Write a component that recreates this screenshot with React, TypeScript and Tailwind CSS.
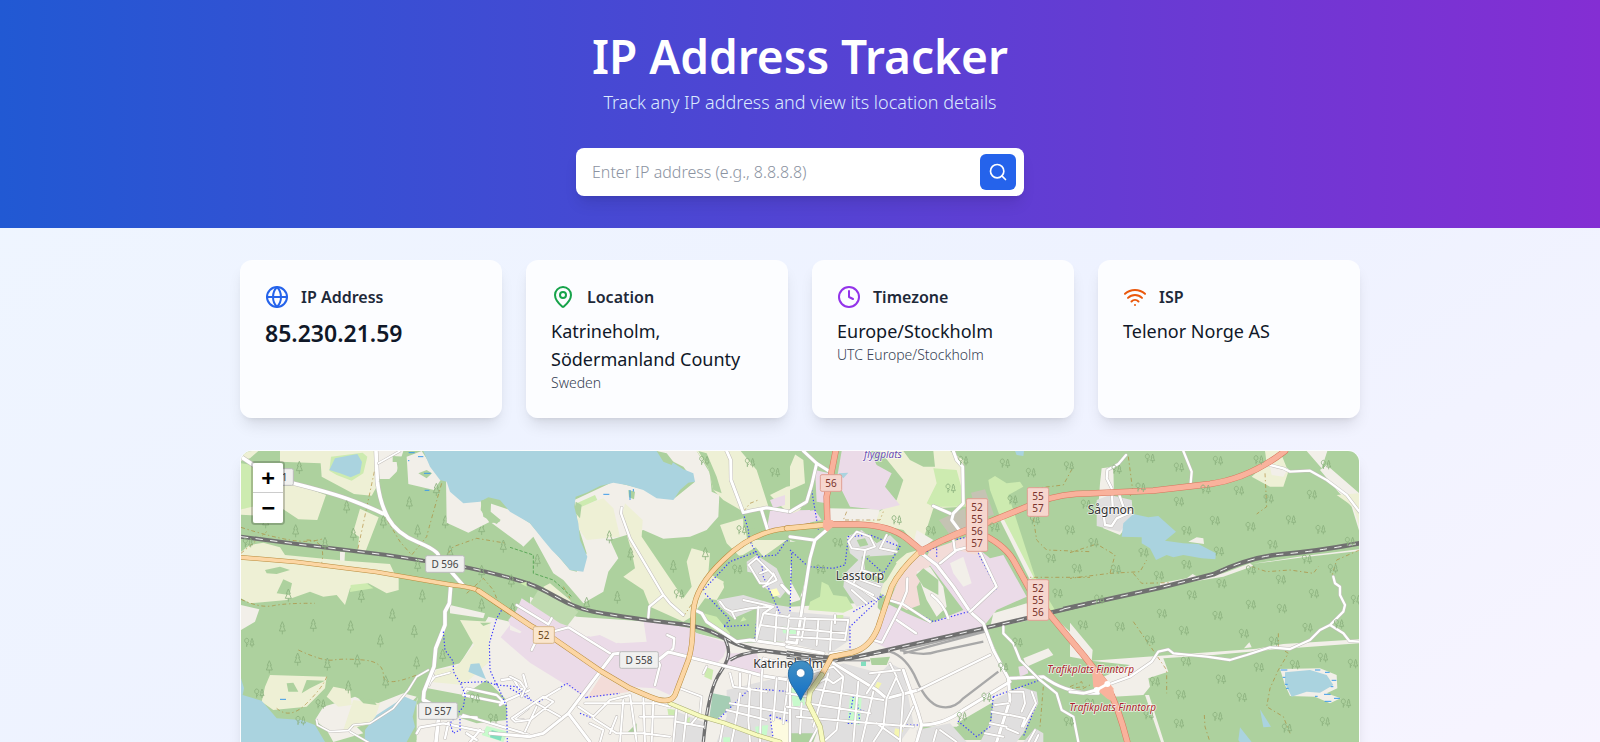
import { useState } from "react";
import type { FormEvent, ReactNode } from "react";
import { Clock, Globe, MapPin, Search, Wifi } from "lucide-react";

const FONT = "font-['Noto_Sans',sans-serif]";

type Point = [number, number];

function Card({ icon, title, children }: { icon: ReactNode; title: string; children: ReactNode }) {
  return (
    <section className="rounded-xl border border-white/20 bg-white/80 p-6 shadow-lg">
      <div className="mb-2 flex items-center gap-3">
        {icon}
        <h2 className="text-base font-semibold text-gray-800">{title}</h2>
      </div>
      {children}
    </section>
  );
}

/* ---------- map drawing ---------- */

function Area({ fill, d }: { fill: string; d: string }) {
  return <path d={d} fill={fill} />;
}

function Road({ d, w = 9, fill = "#ffffff", casing = "#c2bebb", edge = 3 }: { d: string; w?: number; fill?: string; casing?: string; edge?: number }) {
  return (
    <g fill="none" strokeLinecap="round" strokeLinejoin="round">
      <path d={d} stroke={casing} strokeWidth={w + edge} />
      <path d={d} stroke={fill} strokeWidth={w} />
    </g>
  );
}

function Rail({ d, w = 10 }: { d: string; w?: number }) {
  return (
    <g fill="none">
      <path d={d} stroke="#707070" strokeWidth={w} />
      <path d={d} stroke="#f4f4f4" strokeWidth={3} strokeDasharray="22 22" />
    </g>
  );
}

function Footway({ d }: { d: string }) {
  return <path d={d} fill="none" stroke="#3a3aff" strokeWidth={3.5} strokeDasharray="4 6" />;
}

function Track({ d }: { d: string }) {
  return <path d={d} fill="none" stroke="#ac8331" strokeOpacity={0.75} strokeWidth={2.5} strokeDasharray="12 8 4 8" />;
}

function Conifers({ at }: { at: Point[] }) {
  return (
    <g fill="none" stroke="#8bb17e" strokeWidth={2.5}>
      {at.map(([x, y]) => (
        <path key={`${x}-${y}`} d={`M${x} ${y - 18}l-6 14h3l-6 14h18l-6-14h3zM${x} ${y + 10}v10`} />
      ))}
    </g>
  );
}

function MixedTrees({ at }: { at: Point[] }) {
  return (
    <g fill="none" stroke="#8bb17e" strokeWidth={2.5}>
      {at.map(([x, y]) => (
        <path
          key={`${x}-${y}`}
          d={`M${x - 8} ${y - 13}a6 7 0 1 0 .1 0zM${x - 8} ${y + 1}v12M${x - 8} ${y + 9}l5-6M${x + 8} ${y - 13}l-4 10h2l-4 10h12l-4-10h2zM${x + 8} ${y + 7}v7`}
        />
      ))}
    </g>
  );
}

function Shield({ x, y, w, lines, tone = "grey" }: { x: number; y: number; w: number; lines: string[]; tone?: "grey" | "orange" | "red" }) {
  const colors = {
    grey: ["#f0f0ef", "#bcbcbc", "#444444"],
    orange: ["#fae6cd", "#d9b98c", "#6b4a1c"],
    red: ["#f6d6ce", "#e0a193", "#7a332c"],
  }[tone];
  return (
    <g>
      <rect x={x} y={y} width={w} height={lines.length * 36 + 14} rx={5} fill={colors[0]} stroke={colors[1]} strokeWidth={3} />
      {lines.map((line, i) => (
        <text key={line} x={x + w / 2} y={y + 37 + i * 36} textAnchor="middle" fontSize={30} fill={colors[2]}>
          {line}
        </text>
      ))}
    </g>
  );
}

function Label({ x, y, children, size = 36, fill = "#333333", italic = false }: { x: number; y: number; children: string; size?: number; fill?: string; italic?: boolean }) {
  return (
    <text
      x={x}
      y={y}
      textAnchor="middle"
      fontSize={size}
      fill={fill}
      fontStyle={italic ? "italic" : "normal"}
      stroke="#ffffff"
      strokeOpacity={0.7}
      strokeWidth={5}
      strokeLinejoin="round"
      paintOrder="stroke"
    >
      {children}
    </text>
  );
}

const FOREST = "#add19e";
const LAND = "#f2efe9";
const FARM = "#eef0d5";
const WATER = "#aad3df";
const HOMES = "#e0dfdf";
const INDUSTRY = "#ebdbe8";
const GRASS = "#cdebb0";
const PARK = "#c8facc";
const RETAIL = "#f3dcd8";

function WestMap() {
  return (
    <g>
      <Area fill={GRASS} d="M33 70L100 80L90 200L33 208Z" />
      <Area fill={FARM} d="M150 33L437 33L440 140L425 167L372 162L275 110L272 70L150 65ZM33 33L85 33L60 55L33 62ZM33 208L90 195L90 140L190 130L288 165L262 240L205 238L160 208L100 228L33 224Z" />
      <Area fill={GRASS} d="M303 50L398 38L412 50L400 100L365 122L320 105L298 92Z" />
      <Area fill={WATER} d="M315 55L350 48L382 42L396 66L390 100L362 112L330 100L298 90Z" />
      <Area fill={FARM} d="M390 206L446 232L405 338L383 332L387 290L369 278Z" />
      <Area fill={LAND} d="M443 33L520 33L500 95L478 117L448 117ZM530 50L575 33L632 120L612 150L535 132ZM330 335L345 337L343 375L330 375Z" />
      <Area fill={FOREST} d="M488 48L527 50L527 102L505 102L500 66L488 66ZM565 100L590 90L606 100L590 115Z" />
      <Area fill={FARM} d="M33 335L60 315L100 308L150 322L165 345L345 362L480 372L493 400L506 415L506 450L470 460L415 430L360 445L345 495L320 465L280 470L240 455L170 480L60 490L33 475Z" />
      <Area fill={FOREST} d="M105 390L150 380L180 390L140 402L110 400ZM160 418L186 430L178 465L140 460ZM182 480L235 470L190 484Z" />
      <Area fill={GRASS} d="M362 435L410 430L430 445L360 456Z" />
      <Area fill={LAND} d="M33 495L88 508L75 545L33 570ZM660 495L765 520L760 535L660 520ZM775 530L900 560L900 906L560 906L560 780L610 690L690 670L725 615Z" />
      <Area fill={FARM} d="M690 540L780 545L778 665L700 735L595 725L620 690L680 680L732 615ZM120 705L290 710L285 745L230 800L130 810L95 785L105 740Z" />
      <Area fill={FOREST} d="M170 730L190 728L205 755L175 755ZM230 720L285 722L240 745L215 760ZM750 548L785 548L760 558Z" />
      <Area fill={LAND} d="M255 840L280 800L330 785L375 770L430 795L520 760L560 770L500 830L380 860L400 880L310 906L290 870Z" />
      <Area fill={FARM} d="M310 740L360 750L365 795L325 800L290 770ZM370 780L450 790L430 850L340 870Z" />
      <Area fill={FOREST} d="M570 740L700 765L770 720L830 780L830 840L740 850L680 830L590 830L560 790ZM385 775L430 780L440 795L400 790Z" />
      <Area fill={WATER} d="M33 715L42 745L38 765L95 782L140 835L215 840L255 855L285 906L285 1100L33 1100ZM440 825L525 770L560 785L548 830L555 860L530 906L520 1000L400 1000L405 870ZM722 672L748 670L768 718L715 695Z" />
      <Area fill={PARK} d="M770 858L835 875L820 906L755 885Z" />
      <Area fill="#82dfbf" d="M785 870L818 880L812 902L780 892Z" />
      <Track d="M33 262Q120 290 180 300T283 295M230 300Q290 300 275 370M33 478Q90 505 130 497T255 490M205 630Q280 665 310 660T400 660T460 705T560 705M290 710Q280 740 230 790T140 805M635 130Q600 250 590 290L545 345L510 305L465 230M655 340L670 320L740 295L830 310M710 460L760 415L790 450L810 500M433 95L383 330M33 340L110 275" />
      <Rail w={12} d="M33 290L200 312L470 345L580 362Q740 380 900 432" />
      <Road w={11} d="M33 50L70 75M190 130Q310 160 370 183T468 225M438 33L442 125Q450 190 475 235T560 305T625 345M665 397L700 437" />
      <Road w={5} d="M445 70L510 33M595 690L560 710L535 750L490 805L420 850L370 855L355 872L300 875L262 855L260 840M360 875L420 910M595 735L615 710L660 698M610 705L598 735" />
      <Road w={11} d="M662 440L658 490L645 515L645 555L617 625L612 680L582 755L580 780L600 790M625 840L618 906" />
      <Road w={7} d="M700 825L750 840L900 885M690 830L740 832M560 880L570 862L640 850L760 875M710 745L800 765L825 790L700 765ZM815 720L850 715L870 750L890 740L880 705M810 795L832 780L900 750M850 838L900 800M850 838L880 840M645 895L655 848M720 906L750 870M710 880L740 900" />
      <Footway d="M640 575L645 630L670 665L670 695L693 733L706 765L700 800L660 850L670 880L690 870L690 830M693 728L770 725L800 735L780 690L778 610L800 535L815 510M800 730L830 800L832 906M800 735L860 740L900 775" />
      <Road w={11} fill="#fcd6a4" casing="#b98b3c" d="M33 352L200 366L440 396L660 434Q730 442 745 452L900 558" />
      <g stroke="#3d9be9" strokeWidth={3}>
        <path d="M536 38h18M564 50h16M534 62h4M582 100h20M584 151h14M688 206h6M150 778h18" />
      </g>
      <Conifers at={[[208, 82], [350, 200], [197, 272], [538, 188], [619, 148], [460, 245], [563, 272], [285, 310], [370, 282], [646, 245], [755, 265], [820, 318], [660, 335], [563, 375], [394, 468], [577, 467], [487, 524], [250, 555], [157, 563], [362, 560], [553, 573], [451, 602], [638, 645], [203, 657], [118, 680], [382, 662], [292, 672], [560, 668], [467, 725], [755, 394], [844, 422], [755, 494], [848, 508], [175, 465], [355, 740], [107, 245]]} />
      <MixedTrees at={[[58, 608], [88, 760], [212, 842], [272, 792], [790, 835], [54, 308], [735, 775]]} />
      <Shield x={74} y={86} w={116} lines={["D 591"]} />
      <Shield x={587} y={347} w={116} lines={["D 596"]} />
      <Shield x={566} y={788} w={116} lines={["D 557"]} />
    </g>
  );
}

function LakeMap() {
  return (
    <g transform="translate(840 0)">
      <Area fill={LAND} d="M-192 120L-150 160L0 210L60 250L180 390L200 395L230 340L205 260L193 180L310 125L400 148L490 178L555 125L520 80L480 60L440 33L560 33L600 100L605 155L628 165L625 230L590 270L540 290L460 296L400 270L300 300L325 355L295 395L280 455L220 490L160 420L130 400L70 290L40 320L35 315L-60 245L-125 278L-190 248Z" />
      <Area fill={FARM} d="M560 33L692 33L740 90L777 205L700 215L640 180L610 150L595 85ZM630 255L700 235L712 300L740 320L690 350L650 310ZM340 410L375 385L365 335L335 230L345 190L398 240L395 290L520 475L545 440L530 365L545 325L600 340L595 400L650 430L620 480L585 475L545 530L520 545L420 500L400 450ZM100 440L120 430L180 480L200 520L160 500ZM780 165L830 140L885 130L890 185L830 215ZM720 300L830 300L760 350Z" />
      <Area fill={FARM} d="M200 205L280 175L310 205L330 290L230 300L205 265Z" />
      <Area fill={GRASS} d="M200 190L255 165L262 180L215 200ZM580 520L620 530L660 580L655 600L600 560ZM30 430L50 425L50 440Z" />
      <Area fill={FOREST} d="M197 185L215 195L210 235L193 215ZM565 33L590 40L620 110L635 160L610 150L595 85ZM-85 178L-55 178L-60 215L-30 245L-60 250L-88 210ZM700 218L785 212L790 245L760 270L700 262ZM670 350L700 345L760 480L700 470L650 480L640 430ZM840 330L900 315L900 410L840 420Z" />
      <Area fill={WATER} d="M-260 33L-240 80L-210 120L-190 125L-180 155L-140 190L-90 185L-65 172L-30 180L0 215L60 250L100 300L125 330L150 355L180 390L220 395L232 350L210 300L205 250L193 200L197 170L230 158L270 138L310 128L350 135L400 150L440 175L490 180L510 150L535 128L555 125L550 100L520 88L500 75L440 33Z" />
      <Area fill={FOREST} d="M440 33L470 40L490 65L485 75L460 65ZM355 150L375 155L372 178L357 172ZM-88 182L-70 178L-58 190L-58 215L-28 240L-40 252L-80 230Z" />
      <Area fill={LAND} d="M60 560L60 470L200 530L420 545L560 580L680 610L900 600L900 906L60 906Z" />
      <Area fill="#c0dbb0" d="M60 490L85 450L170 490L205 515L170 560L110 535Z" />
      <Area fill={INDUSTRY} d="M35 475L150 550L180 560L230 590L258 580L330 610L410 605L400 540L545 565L560 580L655 610L640 650L620 670L545 650L530 690L480 765L435 745L350 740L270 700L225 770L60 668L-28 592L0 555L-5 540L20 510ZM780 180L825 165L825 195L790 205ZM780 212L900 210L900 255L770 270ZM650 640L740 640L760 700L720 700L640 680Z" />
      <Area fill={LAND} d="M0 555L35 575L30 580L0 570ZM200 535L400 545L405 580L320 610L270 585L240 590L190 555Z" />
      <Area fill={RETAIL} d="M275 705L360 755L230 775Z" />
      <Area fill={HOMES} d="M710 365L740 345L800 385L830 450L810 475L760 440L735 400L712 395ZM620 480L700 465L800 495L900 510L900 610L740 600L740 505L670 535L630 500ZM650 750L900 690L900 906L620 906L650 830ZM490 810L590 850L580 906L490 906Z" />
      <Area fill={FOREST} d="M640 545L730 560L735 598L680 600ZM350 880L380 850L380 885ZM790 850L900 870L900 906L880 900L830 860Z" />
      <Area fill="#a5cdb4" d="M608 760L660 770L665 800L620 838L598 832Z" />
      <Area fill={PARK} d="M815 560L860 560L860 582L820 580ZM850 740L890 740L890 790L840 785ZM735 860L775 855L770 885L740 885ZM640 892L660 892L660 906L640 906Z" />
      <Area fill={GRASS} d="M587 680L610 690L605 720L583 710ZM472 806L500 810L500 830L475 825ZM525 840L540 830L538 855L528 855ZM690 545L700 530L710 540Z" />
      <Area fill="#ffffc0" d="M780 450L800 445L810 465L790 470Z" />
      <Area fill="#fdfbe0" d="M780 830L870 860L860 906L790 906Z" />
      <Track d="M700 215L720 190L745 180M520 530L550 485M160 440L180 475" />
      <path d="M0 322L70 345V400L130 420L185 470" fill="none" stroke="#4ba04b" strokeWidth={2.5} strokeDasharray="10 5" />
      <Footway d="M700 220L715 270L718 300L755 370L760 410L810 520M745 350L800 345L830 300L895 400M585 460L660 540L640 560L720 555M580 450L660 365L740 335M230 772L330 760M0 745L80 790L170 730L230 775M210 820L250 835M625 838L720 745L900 760M735 595L740 540M780 825L790 900M780 825L870 855L860 900" />
      <Rail w={13} d="M55 431C125 455 170 500 250 515C340 532 400 540 520 553C640 570 640 615 760 632L900 650" />
      <Rail w={10} d="M645 597C665 640 655 660 632 695C605 730 590 800 580 906M660 660C690 640 730 635 770 632" />
      <Road w={9} d="M650 33L662 60L663 120L700 218L720 213L770 203L840 215L865 198L885 190L890 145L900 140M755 212L773 270M878 465L838 460L815 435M880 33L900 50" />
      <Road w={7} d="M335 203L333 220L360 295L410 380L460 465L480 490L520 525M460 465L418 500L415 532M20 495L115 553L125 535M65 630L75 610M135 573L175 562L300 640M435 735L450 675L445 665M472 585L493 595L490 625L480 635" />
      <Road w={9} d="M175 820L310 642L330 640M445 660L475 636L700 692L760 708L900 730M-60 880L60 890L100 880L175 820L240 906M555 510L575 520L590 545L680 605L720 600L900 625M895 330L880 480L862 615" />
      <Road w={6} d="M5 835L100 770L130 785L60 840L15 845ZM80 790L150 830M100 775L150 745M45 875L80 800M0 710L30 725L45 745L35 770M205 800L250 830L300 780L360 765L380 906M225 790L300 790L440 790L480 800M240 850L280 870L270 906M250 835L320 880L400 880L480 890M320 830L300 880M340 780L330 906M400 775L405 906M430 785L425 906M390 830L490 830M510 745L575 770L570 820L545 850M580 700L590 680M500 800L490 906M530 815L520 906M500 845L580 860" />
      <Road w={6} d="M630 485L645 505L665 515L720 505L780 500M665 515L675 535M715 375L740 355L790 405L770 430L750 430L720 380ZM760 440L800 420L790 400M750 400L775 390M700 480L790 500L760 520L740 595M760 520L900 540M750 555L900 575M745 500L740 600M800 515L795 605M838 525L830 610M660 700L670 740L770 755M690 700L690 740M720 705L715 750M760 655L755 710L750 906M760 655L900 690M720 745L715 840M800 715L790 840M835 720L820 850M660 790L900 830M650 810L770 840M690 760L680 830L665 906M715 840L720 906M640 850L630 906" />
      <Road w={11} fill="#f7fabf" casing="#a9ad72" d="M480 790L570 828L640 848L740 885L810 906" />
      <Road w={13} fill="#fcd6a4" casing="#b98b3c" d="M-95 452L60 556L130 595L275 695L360 745L420 770Q480 795 495 765L535 660Q548 620 548 560L550 515Q555 440 640 360Q725 275 830 265L910 256" />
      <path d="M280 163h18M370 155v-8M360 150v30" stroke="#3d9be9" strokeWidth={3} />
      <Conifers at={[[82, 360], [362, 341], [490, 378], [322, 471], [230, 490], [586, 340], [298, 290]]} />
      <MixedTrees at={[[720, 68], [795, 97], [855, 356], [507, 462], [583, 62], [695, 270], [682, 388]]} />
      <Shield x={70} y={560} w={63} lines={["52"]} tone="orange" />
      <Shield x={329} y={635} w={116} lines={["D 558"]} />
    </g>
  );
}

function EastTownMap() {
  return (
    <g transform="translate(1680 0)">
      <Area fill={FARM} d="M60 150L75 33L20 33L0 80L0 225L30 210ZM270 33L480 33L520 60L520 200L430 205L390 330L340 270L250 250L150 240L260 220L320 180L340 120ZM350 340L385 330L310 450L280 470L240 420L290 390Z" />
      <Area fill={FOREST} d="M0 33L105 33L120 95L80 110L40 200L0 215L0 150L45 130L40 60ZM340 33L430 33L435 80L400 80L360 60Z" />
      <Area fill={LAND} d="M110 205L270 208L260 240L120 245ZM0 300L60 320L30 480L0 490ZM240 480L320 560L590 570L640 680L660 760L500 860L400 860L380 906L0 906L0 500L200 490Z" />
      <Area fill={INDUSTRY} d="M155 33L240 33L260 75L305 100L285 140L330 195L270 210L180 200L140 120ZM75 90L118 100L110 190L80 185ZM0 220L75 210L95 240L0 260ZM400 350L520 310L570 330L600 355L640 345L710 470L620 510L580 560L300 630L240 600L290 490L350 520L420 550L520 510Z" />
      <Area fill={GRASS} d="M430 85L500 90L530 200L430 200L410 190L440 130ZM595 120L615 108L650 130L690 125L700 140L655 165L735 410L795 510L775 515L720 410L630 230L600 150Z" />
      <Area fill="#c5c3b3" d="M543 158L585 148L612 225L565 235ZM447 240L525 205L530 265L480 285Z" />
      <Area fill={RETAIL} d="M420 330L530 290L580 310L560 345L500 330L450 370L410 350ZM385 345L430 360L380 440L390 495L350 510L300 480L330 410Z" />
      <Area fill={LAND} d="M480 370L520 350L545 430L520 440L490 400ZM380 395L420 380L460 440L470 500L440 530L410 480ZM610 520L710 490L720 540L600 565ZM700 655L775 625L790 645L710 680ZM780 520L905 635L900 660L870 640ZM640 235L730 410L720 420L630 240ZM380 270L430 300L390 330L370 310Z" />
      <Area fill={FOREST} d="M378 405L400 385L445 420L445 465L400 440ZM620 570L700 640L680 690L740 700L900 740L900 906L740 906L730 760L660 740L700 715L650 700L600 590ZM500 850L620 780L640 800L600 906L550 890ZM140 340L280 340L240 400L120 430L60 420L60 350ZM0 860L80 880L70 906L0 906ZM240 655L300 650L290 675L245 675Z" />
      <g transform="translate(-270 90)">
        <Area fill={FOREST} d="M330 300L345 215L385 185L450 190L440 250L460 275L430 330L400 370L340 400L312 380ZM255 215L335 215L325 300L300 385L270 330L275 300ZM500 270L560 250L590 280L560 330L520 370Z" />
        <Area fill={GRASS} d="M365 335L385 345L400 375L440 380L460 415L430 428L325 420L330 395L360 380Z" />
        <Area fill={LAND} d="M460 370L540 340L530 440L470 440Z" />
      </g>
      <Area fill={HOMES} d="M170 290L215 270L260 310L300 285L325 310L310 345L220 350L230 420L280 430L265 480L200 500L160 440L165 400L205 360L180 340ZM0 515L180 530L180 600L120 640L0 610ZM100 690L160 670L270 700L300 670L340 690L370 850L330 906L90 906L60 790ZM0 820L70 850L80 880L0 880ZM610 780L690 740L740 755L745 790L700 880L680 906L570 906L605 840ZM700 906L735 865L760 880V906ZM380 870L480 850L530 906L380 906Z" />
      <Area fill={HOMES} d="M40 740L110 690L60 860L0 850L0 800L40 795Z" />
      <Area fill={FOREST} d="M215 350L240 345L230 365L215 360ZM200 300L225 295L235 315L210 320Z" />
      <Area fill={PARK} d="M180 770L215 770L210 855L172 850ZM0 745L40 740L45 795L10 800ZM0 562L18 562L18 582L0 582Z" />
      <Area fill="#f4f5b0" d="M262 725L275 730L260 755L250 750ZM315 865L340 870L330 892L312 888Z" />
      <Area fill={GRASS} d="M135 525L160 525L160 540L135 540Z" />
      <Area fill={WATER} d="M145 100L175 98L160 115ZM675 33L702 33L700 48L680 45Z" />
      <Area fill="#82dfbf" d="M213 665L228 662L228 678L213 678Z" />
      <Area fill={INDUSTRY} d="M685 680L710 675L715 700L690 710Z" />
      <g fill="none" stroke="#a8a8a8">
        <path d="M330 630Q400 650 440 635L580 605M300 635Q350 650 380 720T450 800T520 775L625 695M340 640L585 575" strokeWidth={7} />
        <path d="M330 632L585 572M130 662L240 662" strokeWidth={5} />
      </g>
      <Track d="M735 145L820 135L850 80M730 235L740 300L770 330L900 335M700 412L900 412M760 740L750 860M850 760L900 735M170 215L160 240L270 240L280 215" />
      <Footway d="M0 330L55 380L130 385L165 375L175 290L240 285L330 320L280 400L225 350M65 150L85 270M5 340L0 520M190 515L280 465L180 560L180 640M320 485L430 545L535 515L620 445L565 340M490 300L540 290M410 335L440 320L440 350M610 770L750 720M610 770L600 860L560 890L500 840M190 770L175 850L210 850L200 770M210 810L240 820L225 850M740 790L700 890M330 855L390 855" />
      <Rail w={13} d="M-10 638Q90 655 180 655L300 628L580 565L900 490" />
      <Rail w={9} d="M-10 652L120 666L300 632" />
      <Road w={9} d="M40 33L80 70L120 95M80 70L65 135L50 185L0 215M490 33L500 60L518 80L520 190L490 220L485 240L515 280M430 198L480 220M110 270L75 300L60 355L20 610L-10 605M0 290L70 300M395 340L440 375L490 440L540 515L580 550L610 630L655 715L660 780L620 906M660 715L760 710Q820 755 900 760L925 760M660 725L520 810Q460 855 395 855M-10 620L100 640M130 670L260 750L290 775L385 750M340 690L385 820L395 855L380 906" />
      <Road w={7} d="M450 370L500 330L540 320M490 300L495 335M570 335L620 440L540 515M302 482L335 492L275 608L245 598M335 492L350 455L352 415M320 540L378 580M425 465Q460 490 475 535M335 490L420 545M385 750L600 645M640 560L640 580L670 610L690 660L750 720L800 760L815 810L850 830L865 906" />
      <Road w={6} d="M175 305L200 275L240 290L255 320L225 330L185 325ZM225 335L215 390L190 430L260 480M215 390L275 410M200 415L270 440M290 285L270 325L320 335M0 535L175 540L165 600L0 590M45 535L35 600M85 540L80 615M125 545L120 630M0 565L165 580M135 525V550M60 700L130 680L160 710L130 730L110 715L50 745M60 745L280 780M50 790L240 820M20 830L370 860M90 850L60 906M115 700L70 860M160 710L140 870L100 906M205 725L190 906M250 755L215 906M270 700L230 760M300 670L320 710L290 775L280 860L250 906M240 700L330 690M320 715L340 760L330 906M260 850L330 900M370 800L340 860M-10 760L60 770M-10 800L60 810M0 710L0 906M35 790L30 880M120 640L200 630M430 906L440 870M450 870L500 906" />
      <Road w={6} d="M660 755L700 755L705 790L695 815M725 755L738 790L700 860M615 795L655 790M605 815L655 825M660 825L705 835L695 860M600 850L650 860M650 865L685 880M585 880L640 890M715 906L735 870M735 906L745 885M165 420L250 465M185 450L230 490M175 400L195 415" />
      <g fill="none" strokeLinecap="round" strokeLinejoin="round">
        <path d="M-10 265L110 254" stroke="#b98b3c" strokeWidth={17} />
        <path d="M-10 265L110 254" stroke="#fcd6a4" strokeWidth={14} />
      </g>
      <Road w={14} fill="#fcd6a4" casing="#b98b3c" d="M388 336Q330 390 305 440L265 560Q240 625 185 638L125 650L95 705" />
      <Road w={13} fill="#f7fabf" casing="#a9ad72" d="M95 705L60 755L55 790L90 860L98 906L110 1020" />
      <Road w={16} fill="#f9b29c" casing="#d6755c" d="M137 33L110 170L112 245M112 253L200 253Q300 255 350 295L395 332L460 300L560 260M395 332Q500 275 600 245L745 186M560 275Q640 310 670 360L720 450L745 480" />
      <Area fill="#f9b29c" d="M100 240L128 240L135 255L112 275L98 262ZM380 318L412 325L402 345L385 345Z" />
      <MixedTrees at={[[520, 62], [645, 70], [723, 98], [837, 78], [668, 180], [482, 145], [423, 272], [735, 240], [840, 270], [143, 308], [783, 355], [320, 240], [803, 460], [683, 607], [516, 830], [590, 772], [837, 845], [640, 682], [614, 262], [92, 388]]} />
      <Shield x={91} y={104} w={64} lines={["56"]} tone="red" />
      <Shield x={529} y={176} w={64} lines={["52", "55", "56", "57"]} tone="red" />
      <Label x={279} y={53} size={30} fill="#6b4fb0" italic>flygplats</Label>
      <Label x={210} y={420}>Lasstorp</Label>
    </g>
  );
}

function EastForestMap() {
  return (
    <g transform="translate(2520 0)">
      <Area fill={LAND} d="M95 85L130 80L132 170L185 185L190 230L150 285L100 265L85 200L90 130ZM0 548L68 630L65 662L0 650ZM65 662L560 626L640 612L868 598L868 610L640 626L430 645L280 655L295 695L235 715L240 740L220 765L130 770L100 710L180 675ZM225 765L237 765L282 906H273ZM710 33L772 33L755 85ZM750 90L770 75L868 160L868 275L845 200L800 150Z" />
      <Area fill={FARM} d="M545 110L590 70L585 33L630 33L655 95L640 140L600 140ZM800 165L868 160L868 260L850 200Z" />
      <Area fill={LAND} d="M600 80L655 85L640 110L605 105ZM270 430L350 415L368 402L385 412L460 400L540 370L550 378L460 410L270 440ZM522 625L538 607L545 622ZM545 372L700 348L868 328V333L700 352Z" />
      <Area fill={HOMES} d="M80 180L120 165L185 180L188 225L150 275L80 258Z" />
      <Area fill={WATER} d="M190 222L235 232L265 228L318 275L285 302L340 310L385 312L438 340L436 358L395 355L340 345L310 352L290 345L258 360L240 325L215 310L215 292L155 290L160 250ZM570 808L603 860L580 862ZM510 862L545 906L545 960L505 900Z" />
      <Area fill={LAND} d="M355 305L380 292L400 295L402 312ZM630 687L750 685L800 705L802 745L770 760L812 775L780 790L735 770L660 768L645 735Z" />
      <Area fill={WATER} d="M645 697L720 690L770 705L790 735L750 758L710 755L665 770L645 730Z" />
      <path d="M632 690h20M735 690h16M765 697h14M785 721h14M782 740h8M762 763h20M792 775h18M764 784h20M735 769h8M638 712h8M645 733h8M648 745h8" stroke="#3d9be9" strokeWidth={3} />
      <Track d="M175 50L188 150L180 170M0 338L80 312L135 345L120 400L0 415M120 400L210 395L230 360M190 400L215 430L300 428M585 100L590 200L560 222M545 380L590 395L660 390L730 400L745 380M868 330L800 360L785 410M190 545L235 610L290 690L290 760M625 580L625 620L655 640L625 690L600 745L590 800L640 830L660 880M403 825L405 860L420 906M0 740L35 725L40 740L0 745" />
      <Road w={7} d="M168 45L145 72L112 90L110 115L125 145L128 200M340 33L365 95L362 130M148 165L160 200M100 215L105 255L125 258L140 235L185 215M600 75L640 85L660 95L720 92L770 120L830 165L868 215M790 410L795 430L810 440L810 465L825 495L820 515L780 555L750 570L720 600L660 627L600 622L530 645L480 660L410 650L310 640L295 628L265 635L245 665L180 710L120 732M780 555L820 580L838 603L868 605" />
      <Road w={9} d="M0 755L40 760L80 750L115 732" />
      <Rail w={14} d="M-20 507L270 443L430 403Q540 350 640 342T868 310" />
      <Road w={16} fill="#f9b29c" casing="#d6755c" d="M-95 186Q-25 160 60 160L250 152L420 132Q540 115 645 33M-95 475L-60 525L40 645L110 735Q145 800 172 906L210 1040" />
      <Area fill="#f9b29c" d="M65 680L85 690L130 745L135 790L110 775L70 740Z" />
      <circle cx={80} cy={750} r={9} fill="#ffffff" />
      <circle cx={112} cy={732} r={9} fill="#ffffff" />
      <path d="M80 750L112 732" stroke="#ffffff" strokeWidth={8} />
      <Shield x={-128} y={143} w={64} lines={["55", "57"]} tone="red" />
      <Shield x={-128} y={419} w={64} lines={["52", "55", "56"]} tone="red" />
      <MixedTrees at={[[240, 55], [327, 82], [444, 62], [507, 152], [327, 185], [407, 148], [596, 176], [726, 164], [768, 74], [435, 242], [542, 260], [663, 240], [752, 269], [350, 272], [48, 193], [71, 308], [221, 338], [447, 334], [608, 314], [840, 305], [21, 386], [138, 388], [267, 407], [350, 374], [455, 431], [543, 390], [633, 419], [711, 358], [789, 386], [366, 465], [543, 494], [732, 461], [858, 479], [636, 506], [276, 521], [443, 527], [39, 555], [150, 560], [342, 572], [522, 581], [713, 563], [807, 552], [240, 600], [612, 604], [348, 665], [567, 682], [675, 674], [759, 653], [849, 671], [255, 725], [453, 718], [333, 764], [516, 772], [828, 790], [60, 790], [443, 830], [327, 851], [765, 845], [651, 865], [236, 825], [566, 60], [212, 142], [140, 88], [88, 478]]} />
      <Label x={123} y={221}>Sågmon</Label>
      <Label x={62} y={698} size={30} fill="#ac1f2c" italic>Trafikplats Finntorp</Label>
      <Label x={128} y={813} size={30} fill="#ac1f2c" italic>Trafikplats Finntorp</Label>
    </g>
  );
}

function Marker() {
  return (
    <g>
      <path d="M1714 778L1742 715Q1770 680 1784 700Q1784 725 1714 778Z" fill="#000000" fillOpacity={0.3} filter="url(#soft)" />
      <path d="M1712 663C1690 663 1675 680 1675 702C1675 732 1700 750 1712 781C1724 750 1749 732 1749 702C1749 680 1734 663 1712 663Z" fill="url(#pin)" stroke="#2a6da3" strokeWidth={3} />
      <circle cx={1712} cy={699} r={13} fill="#ffffff" stroke="#2a6da3" strokeWidth={2} />
    </g>
  );
}

function MapDrawing() {
  return (
    <svg
      role="img"
      aria-label="Map of Katrineholm"
      viewBox="33 33 3354 1494"
      preserveAspectRatio="xMidYMid slice"
      className="block h-full w-full font-['Noto_Sans',sans-serif]"
    >
      <defs>
        <linearGradient id="pin" x1="0" y1="0" x2="0" y2="1">
          <stop offset="0" stopColor="#4290c4" />
          <stop offset="1" stopColor="#126fc6" />
        </linearGradient>
        <filter id="soft" x="-30%" y="-30%" width="160%" height="160%">
          <feGaussianBlur stdDeviation="5" />
        </filter>
      </defs>
      <rect x={33} y={33} width={3354} height={1494} fill={FOREST} />
      <rect x={560} y={900} width={1900} height={627} fill={LAND} />
      <WestMap />
      <LakeMap />
      <EastTownMap />
      <EastForestMap />
      <Label x={1674} y={685}>Katrineholm</Label>
      <Marker />
    </svg>
  );
}

export default function App() {
  const [query, setQuery] = useState("");
  const submit = (event: FormEvent) => event.preventDefault();

  return (
    <div className={`min-h-screen bg-linear-to-br/srgb from-[#eff6ff] via-[#eef2ff] to-[#faf5ff] text-base text-gray-900 ${FONT}`}>
      <header className="bg-linear-to-r/srgb from-[#2159d3] to-[#842ed3] px-4 py-8">
        <div className="text-center">
          <h1 className="mb-2 text-[46px] leading-[48px] font-semibold text-white">IP Address Tracker</h1>
          <p className="mb-8 text-lg leading-7 font-light text-blue-100">Track any IP address and view its location details</p>
        </div>
        <form onSubmit={submit} className="mx-auto flex h-12 max-w-md items-center rounded-lg bg-white pr-2 pl-4 shadow-lg">
          <input
            type="text"
            aria-label="IP address"
            placeholder="Enter IP address (e.g., 8.8.8.8)"
            value={query}
            onChange={(event) => setQuery(event.target.value)}
            className="min-w-0 flex-1 bg-transparent font-light text-gray-900 outline-none placeholder:text-[#8b93a1]"
          />
          <button type="submit" aria-label="Search" className="rounded-md bg-[#2563eb] p-2 text-white">
            <Search className="size-5" />
          </button>
        </form>
      </header>

      <main className="mx-auto max-w-6xl px-4 py-8">
        <div className="mb-8 grid grid-cols-1 gap-6 md:grid-cols-2 lg:grid-cols-4">
          <Card icon={<Globe className="size-6 text-[#2563eb]" />} title="IP Address">
            <p className="text-[23px] leading-8 font-semibold">85.230.21.59</p>
          </Card>
          <Card icon={<MapPin className="size-6 text-[#16a34a]" />} title="Location">
            <p className="text-lg leading-7">Katrineholm, Södermanland County</p>
            <p className="text-sm font-light text-gray-700">Sweden</p>
          </Card>
          <Card icon={<Clock className="size-6 text-[#9333ea]" />} title="Timezone">
            <p className="text-lg leading-7">Europe/Stockholm</p>
            <p className="text-sm font-light text-gray-700">UTC Europe/Stockholm</p>
          </Card>
          <Card icon={<Wifi className="size-6 text-[#ea580c]" />} title="ISP">
            <p className="text-lg leading-7">Telenor Norge AS</p>
          </Card>
        </div>

        <div className="relative h-[500px] overflow-hidden rounded-xl border border-white/80 shadow-lg">
          <MapDrawing />
          <div className="absolute top-2.5 left-2.5 flex flex-col rounded-sm border-2 border-black/20 bg-clip-padding font-['DejaVu_Sans_Mono',monospace] text-[22px] leading-[30px] font-bold text-black">
            <button type="button" aria-label="Zoom in" className="h-[30px] w-[30px] rounded-t-xs border-b border-[#cccccc] bg-white">
              +
            </button>
            <button type="button" aria-label="Zoom out" className="h-[30px] w-[30px] rounded-b-xs bg-white">
              −
            </button>
          </div>
        </div>
      </main>
    </div>
  );
}
